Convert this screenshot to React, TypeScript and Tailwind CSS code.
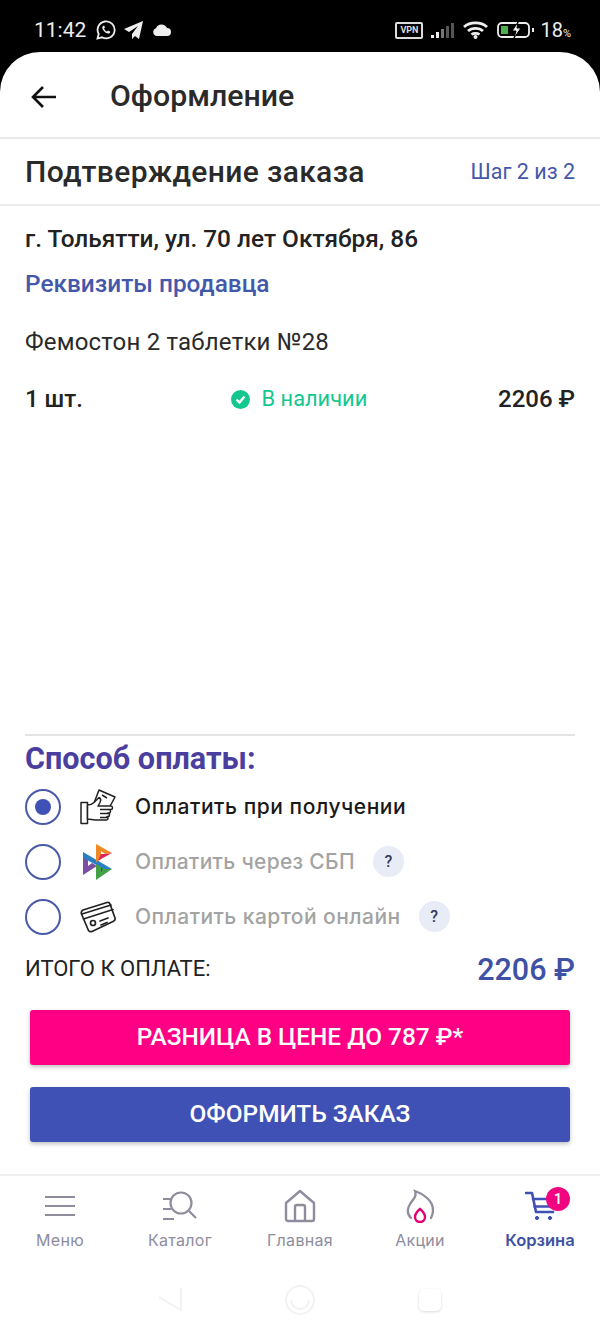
import type { ReactNode } from 'react';

const navItems = [
  { label: 'Меню', icon: <MenuIcon /> },
  { label: 'Каталог', icon: <CatalogIcon /> },
  { label: 'Главная', icon: <HomeIcon /> },
  { label: 'Акции', icon: <FlameIcon /> },
];

function MenuIcon() {
  return (
    <svg width="30" height="22" viewBox="0 0 30 22" fill="none" stroke="#8d8d9e" strokeWidth="2.2">
      <path d="M0 2h30M0 11h30M0 20h30" />
    </svg>
  );
}

function CatalogIcon() {
  return (
    <svg width="36" height="32" viewBox="0 0 36 32" fill="none" stroke="#8d8d9e" strokeWidth="2.2">
      <circle cx="19" cy="13" r="10.500" />
      <path d="M27 21l7 7M1 9h8M1 19h8M1 29h11" />
    </svg>
  );
}

function HomeIcon() {
  return (
    <svg width="32" height="34" viewBox="0 0 32 34" fill="none" stroke="#8d8d9e" strokeWidth="2.400" strokeLinejoin="round">
      <path d="M2 14L16 2l14 12v16a2 2 0 0 1-2 2H4a2 2 0 0 1-2-2z" />
      <path d="M11 32V18a2 2 0 0 1 2-2h6a2 2 0 0 1 2 2v14" />
    </svg>
  );
}

function FlameIcon() {
  return (
    <svg width="28" height="34" viewBox="0 0 28 34" fill="none" strokeWidth="2.300" strokeLinecap="round">
      <path d="M5 29C1 25 1 20 4 15 7 10 11 8 9 2c9 3 18 10 18 19 0 3-1 6-2 8" stroke="#8d8d9e" />
      <path d="M14 20c3 2.500 5 5 5 8a5 5 0 0 1-10 0c0-3 2-5.500 5-8z" stroke="#e6006f" strokeWidth="2.400" />
    </svg>
  );
}

function CartIcon() {
  return (
    <svg width="30" height="30" viewBox="0 0 30 30" fill="none" stroke="#3f51b5" strokeWidth="2.600" strokeLinecap="round" strokeLinejoin="round">
      <path d="M1 2h6l4 19h17" />
      <path d="M8 8h20M9.500 15.500h17" />
      <circle cx="12" cy="27" r="1.600" fill="#3f51b5" strokeWidth="1" />
      <circle cx="25" cy="27" r="1.600" fill="#3f51b5" strokeWidth="1" />
    </svg>
  );
}

function HandCardIcon() {
  return (
    <svg width="36" height="36" viewBox="0 0 36 36" fill="#fff" stroke="#222" strokeWidth="1.500" strokeLinejoin="round">
      <path d="M14 14L19 1l16 7-7 13" />
      <path d="M22 6l5 3" />
      <rect x="1" y="13.500" width="6.500" height="21" />
      <path d="M7.500 16c3 0 5-1 6.500-2.500l5-5c2 1 2 3 1 5l-2 3.500h13c2 0 2 3.500 0 3.500h-2c2 0 2 3.500 0 3.500h-1c2 0 2 3.500 0 3.500h-1c1.500 0 1.500 3.500-.5 3.500H15c-3 0-4-1-7.500-1z" />
      <path d="M20 20.500h9M20 24.500h9M20 28.500h8" />
    </svg>
  );
}

function SbpIcon() {
  return (
    <svg width="30" height="36" viewBox="0 0 30 36">
      <path d="M0 8v23l14-9-5-3-4 3v-9z" fill="#7b4fa3" />
      <path d="M0 8l29 17h-8L0 14z" fill="#2b7fc4" />
      <path d="M13 0l16 9-7 1-4-3v8l-5 3z" fill="#f08a24" />
      <path d="M29 9L18 15l-3 2 3-7h4z" fill="#e0245e" />
      <path d="M13 20l5 3v6l3-4h8L13 36z" fill="#43a047" />
      <path d="M18 23v6l3-4z" fill="#1b7a3d" />
    </svg>
  );
}

function CardIcon() {
  return (
    <svg width="36" height="32" viewBox="0 0 36 32" fill="#fff" stroke="#222" strokeWidth="1.700" strokeLinecap="round" strokeLinejoin="round">
      <path d="M3 9L27 1.500c1.500-.4 2.500 0 3 1.500L35 17c.4 1.500 0 2.500-1.500 3.200L12 30.500c-1.500.5-2.500.2-3.500-1L1.500 13c-.6-1.500 0-3 1.500-4z" />
      <path d="M2 13L31 4M3.500 18L33 8.500" />
      <circle cx="13" cy="22" r="2.500" />
      <path d="M20 20l8-3M21 24l6-2.500" />
    </svg>
  );
}

function StatusIcons() {
  return (
    <div className="flex items-center">
      <div className="flex h-[17px] w-[28px] items-center justify-center rounded-[2px] border-2 border-[#ddd] text-[9px] font-bold leading-none text-[#ddd]">VPN</div>
      <svg className="ml-[8px]" width="24" height="15" viewBox="0 0 24 15">
        <rect x="0" y="12" width="3" height="3" fill="#eee" />
        <rect x="5" y="9" width="3" height="6" fill="#eee" />
        <rect x="10" y="6" width="3" height="9" fill="#777" />
        <rect x="15" y="3" width="3" height="12" fill="#555" />
        <rect x="20" y="0" width="3" height="15" fill="#555" />
      </svg>
      <svg className="ml-[8px]" width="25" height="18" viewBox="0 0 25 18" fill="none" stroke="#eee" strokeWidth="2.800">
        <path d="M1 6c6-5.500 17-5.500 23 0M5 10c4-3.500 11-3.500 15 0M8.500 13.500c2-1.500 6-1.500 8 0" />
        <circle cx="12.500" cy="16" r="2" fill="#eee" stroke="none" />
      </svg>
      <svg className="ml-[9px]" width="38" height="16" viewBox="0 0 38 16" fill="none">
        <rect x="1" y="1" width="31" height="14" rx="4" stroke="#eee" strokeWidth="1.800" />
        <rect x="4" y="4" width="7" height="8" fill="#4caf50" />
        <path d="M21 0l-6 9h4l-2 7 7-10h-4z" fill="#eee" stroke="#000" strokeWidth="1" />
        <rect x="35" y="6" width="2" height="4" fill="#eee" />
      </svg>
      <span className="ml-[5px] text-[20px] leading-none text-[#eee]">18<span className="text-[11px]">%</span></span>
    </div>
  );
}

function PaymentRow({ active, icon, label, hint, labelClass }: { active?: boolean; icon: ReactNode; label: string; hint?: boolean; labelClass: string }) {
  return (
    <div className="flex h-[55px] items-center">
      <div className="flex h-9 w-9 items-center justify-center rounded-full border-2 border-[#4a5aa8]">
        {active && <div className="h-[16px] w-[16px] rounded-full bg-[#3f51b5]" />}
      </div>
      <div className="ml-[18px] flex w-[38px] justify-center">{icon}</div>
      <span className={`ml-[18px] text-[21px] font-medium [font-family:Inter,sans-serif] ${labelClass}`}>
        {label}
      </span>
      {hint && (
        <span className="ml-[18px] flex h-[31px] w-[31px] items-center justify-center rounded-full bg-[#e8ecf7] text-[16px] font-medium text-[#333b5c]">?</span>
      )}
    </div>
  );
}

export default function App() {
  return (
    <div className="flex h-[1332px] w-[600px] flex-col overflow-hidden bg-black [font-family:Roboto,sans-serif]">
      {/* Status bar */}
      <div className="flex h-[52px] shrink-0 items-center justify-between pl-[34px] pr-[29px] pt-[8px] text-[#eee]">
        <div className="flex items-center">
          <span className="text-[21px] leading-none">11:42</span>
          <svg className="ml-[10px]" width="20" height="20" viewBox="0 0 20 20" fill="none" stroke="#eee" strokeWidth="1.800">
            <path d="M1.500 18.500l1.200-4.500A8.500 8.500 0 1 1 6 17.300z" />
            <path d="M7 6c-1 1-1 2.500.5 4.500S11 14 13 13.500c1-.5 1.500-1 1-2l-2-1-1 1c-1 0-2.500-1.500-3-3l1-1-1-2z" fill="#eee" stroke="none" />
          </svg>
          <svg className="ml-[8px]" width="20" height="18" viewBox="0 0 20 18" fill="#eee">
            <path d="M19 0L0 8l5 3 9-6-6 8v5l3-3 4 3z" />
          </svg>
          <svg className="ml-[9px]" width="18" height="12" viewBox="0 0 18 12" fill="#eee">
            <path d="M4 12a4 4 0 0 1-1-7.800A6 6 0 0 1 14 4a4 4 0 0 1 0 8z" />
          </svg>
        </div>
        <StatusIcons />
      </div>

      {/* Sheet */}
      <div className="flex flex-1 flex-col rounded-t-[40px] bg-white">
        <header className="flex h-[87px] shrink-0 items-center border-b-2 border-[#e9e9e9] pl-[30px] pt-[4px]">
          <svg width="26" height="24" viewBox="0 0 26 24" fill="none" stroke="#111" strokeWidth="2.600">
            <path d="M26 12H3M13 2L3 12l10 10" />
          </svg>
          <h1 className="ml-[54px] text-[30.300px] font-medium leading-none text-[#2a2a2a]">Оформление</h1>
        </header>

        <div className="flex h-[67px] shrink-0 items-center justify-between border-b-2 border-[#ececec] px-[25px]">
          <h2 className="text-[30px] font-medium leading-none tracking-[0.35px] text-[#2a2a2a]">Подтверждение заказа</h2>
          <span className="text-[21.500px] leading-none text-[#4458ab]">Шаг 2 из 2</span>
        </div>

        <div className="flex-1 px-[25px]">
          <p className="mt-[18px] text-[24.400px] font-medium leading-[30px] text-[#222]">г. Тольятти, ул. 70 лет Октября, 86</p>
          <p className="mt-[15px] text-[24.400px] font-medium leading-[30px] text-[#4458ab]">Реквизиты продавца</p>
          <p className="mt-[28px] text-[24px] leading-[30px] tracking-[0.2px] text-[#2a2a2a]">Фемостон 2 таблетки №28</p>
          <div className="mt-[27px] flex h-[30px] items-center justify-between">
            <span className="text-[24px] font-medium text-[#222]">1 шт.</span>
            <div className="ml-[17px] flex items-center gap-[12px]">
              <span className="flex h-[19px] w-[19px] items-center justify-center rounded-full bg-[#14c78f]">
                <svg width="13" height="13" viewBox="0 0 13 13" fill="none" stroke="#fff" strokeWidth="2.400">
                  <path d="M2.500 6.500l3 3 5-6" />
                </svg>
              </span>
              <span className="text-[21.800px] text-[#14c78f]">В наличии</span>
            </div>
            <span className="text-[24px] font-medium text-[#222]">2206 ₽</span>
          </div>
        </div>

        {/* Payment */}
        <div className="mx-[25px] shrink-0 border-t-2 border-[#e4e4e4]">
          <h3 className="mt-[5px] text-[30.600px] font-bold leading-[36px] text-[#4a3f9f]">Способ оплаты:</h3>
          <div className="mt-[2px]">
            <PaymentRow active icon={<HandCardIcon />} label="Оплатить при получении" labelClass="tracking-[0.55px] text-[#1a1a1a]" />
            <PaymentRow icon={<SbpIcon />} label="Оплатить через СБП" labelClass="tracking-[0.3px] text-[#a3a3a3]" hint />
            <PaymentRow icon={<CardIcon />} label="Оплатить картой онлайн" labelClass="tracking-[0.45px] text-[#a3a3a3]" hint />
          </div>
          <div className="flex h-[50px] items-center justify-between">
            <span className="text-[22px] leading-none text-[#222]">ИТОГО К ОПЛАТЕ:</span>
            <span className="pt-[2px] text-[30.500px] font-medium leading-none text-[#3f51a5]">2206 ₽</span>
          </div>
        </div>

        <div className="mt-[16px] flex shrink-0 flex-col gap-[22px] px-[30px]">
          <button className="h-[55px] rounded-[3px] bg-[#ff0084] text-[24.400px] font-medium text-white shadow-[0_2px_4px_rgba(0,0,0,0.25)]">
            РАЗНИЦА В ЦЕНЕ ДО 787 ₽*
          </button>
          <button className="h-[55px] rounded-[3px] bg-[#3f51b5] text-[24.400px] font-medium text-white shadow-[0_2px_4px_rgba(0,0,0,0.25)]">
            ОФОРМИТЬ ЗАКАЗ
          </button>
        </div>

        {/* Bottom nav */}
        <nav className="mt-[32px] flex h-[78px] shrink-0 border-t-2 border-[#efefef]">
          {navItems.map((item) => (
            <div key={item.label} className="flex flex-1 flex-col items-center">
              <div className="flex h-[48px] items-center pt-[12px]">{item.icon}</div>
              <span className="mt-[6px] text-[16px] leading-[20px] tracking-[0.3px] text-[#8d8d9e] [font-family:Inter,sans-serif]">{item.label}</span>
            </div>
          ))}
          <div className="relative flex flex-1 flex-col items-center">
            <div className="flex h-[48px] items-center pt-[12px]"><CartIcon /></div>
            <span className="absolute left-[66px] top-[11px] flex h-[24px] w-[24px] items-center justify-center rounded-full bg-[#f0047f] text-[15px] font-medium text-white">1</span>
            <span className="mt-[6px] text-[16.500px] font-semibold leading-[20px] text-[#3f51a5] [font-family:Inter,sans-serif]">Корзина</span>
          </div>
        </nav>

        {/* System nav */}
        <div className="flex h-[80px] shrink-0 items-center justify-center">
          <svg className="mt-[16px]" width="26" height="26" viewBox="2 0 26 26" fill="none" stroke="#f2f2f2" strokeWidth="2">
            <path d="M24 1v22L2 10" />
          </svg>
          <svg className="ml-[100px] mt-[16px]" width="30" height="30" viewBox="0 0 30 30" fill="none" stroke="#f2f2f2" strokeWidth="2">
            <circle cx="15" cy="15" r="14" />
            <path d="M6 15a9 9 0 0 0 18 0" />
          </svg>
          <div className="ml-[104px] mt-[16px] h-[22px] w-[22px] rounded-[5px] bg-white shadow-[0_1px_3px_rgba(0,0,0,0.15)]" />
        </div>
      </div>
    </div>
  );
}
